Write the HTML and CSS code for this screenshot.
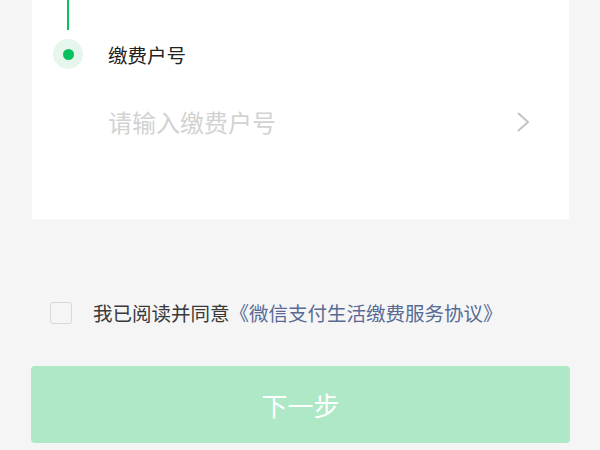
FILE: index.html
```html
<!DOCTYPE html>
<html lang="zh-CN">
<head>
  <meta charset="UTF-8">
  <meta name="viewport" content="width=device-width, initial-scale=1.0">
  <title>生活缴费</title>
  <link rel="stylesheet" href="styles.css">
</head>
<body>
  <div class="card">
    <div class="step-line"></div>
    <div class="step">
      <span class="step-dot"></span>
      <span class="step-title">缴费户号</span>
    </div>
    <div class="field">
      <span class="placeholder">请输入缴费户号</span>
      <svg class="chevron" width="14" height="22" viewBox="0 0 14 22">
        <path d="M2 2 L12 11 L2 20" fill="none" stroke="#c4c4c4" stroke-width="2"/>
      </svg>
    </div>
  </div>

  <div class="agree">
    <span class="checkbox"></span>
    <span class="agree-text">我已阅读并同意<a class="link">《微信支付生活缴费服务协议》</a></span>
  </div>

  <button type="button" class="next-button">下一步</button>
</body>
</html>
```

FILE: styles.css
```css
body {
  margin: 0;
  width: 600px;
  height: 450px;
  overflow: hidden;
  background-color: #f5f5f5;
  font-family: "Noto Sans CJK SC", "Noto Sans", sans-serif;
}

.card {
  margin: 0 31px 0 32px;
  height: 219px;
  background-color: #ffffff;
  box-sizing: border-box;
  padding-left: 21px;
}

.step-line {
  width: 2px;
  height: 30px;
  margin-left: 14px;
  background-color: #07c160;
}

.step {
  display: flex;
  align-items: center;
  height: 48px;
}

.step-dot {
  width: 30px;
  height: 30px;
  border-radius: 50%;
  background-color: #e7f6ec;
  display: flex;
  align-items: center;
  justify-content: center;
}

.step-dot:after {
  content: '';
  width: 11px;
  height: 11px;
  border-radius: 50%;
  background-color: #07c160;
}

.step-title {
  margin-left: 25px;
  font-size: 19.5px;
  color: #222;
}

.field {
  display: flex;
  align-items: center;
  justify-content: space-between;
  margin-top: 26px;
  margin-left: 55px;
  margin-right: 39px;
}

.placeholder {
  font-size: 24px;
  color: #d2d2d2;
}

.agree {
  display: flex;
  align-items: center;
  margin-top: 79px;
  margin-left: 50px;
}

.checkbox {
  width: 20px;
  height: 20px;
  border: 1.5px solid #d8d8d8;
  border-radius: 3px;
}

.agree-text {
  margin-left: 21px;
  font-size: 19.5px;
  color: #3a3a3a;
}

.link {
  color: #576b95;
}

.next-button {
  display: block;
  margin: 39px 30px 0 31px;
  width: 539px;
  height: 77px;
  border: none;
  border-radius: 4px;
  background-color: #aee8c6;
  color: #ffffff;
  font-family: "Noto Sans CJK SC", "Noto Sans", sans-serif;
  font-size: 26px;
}
```
